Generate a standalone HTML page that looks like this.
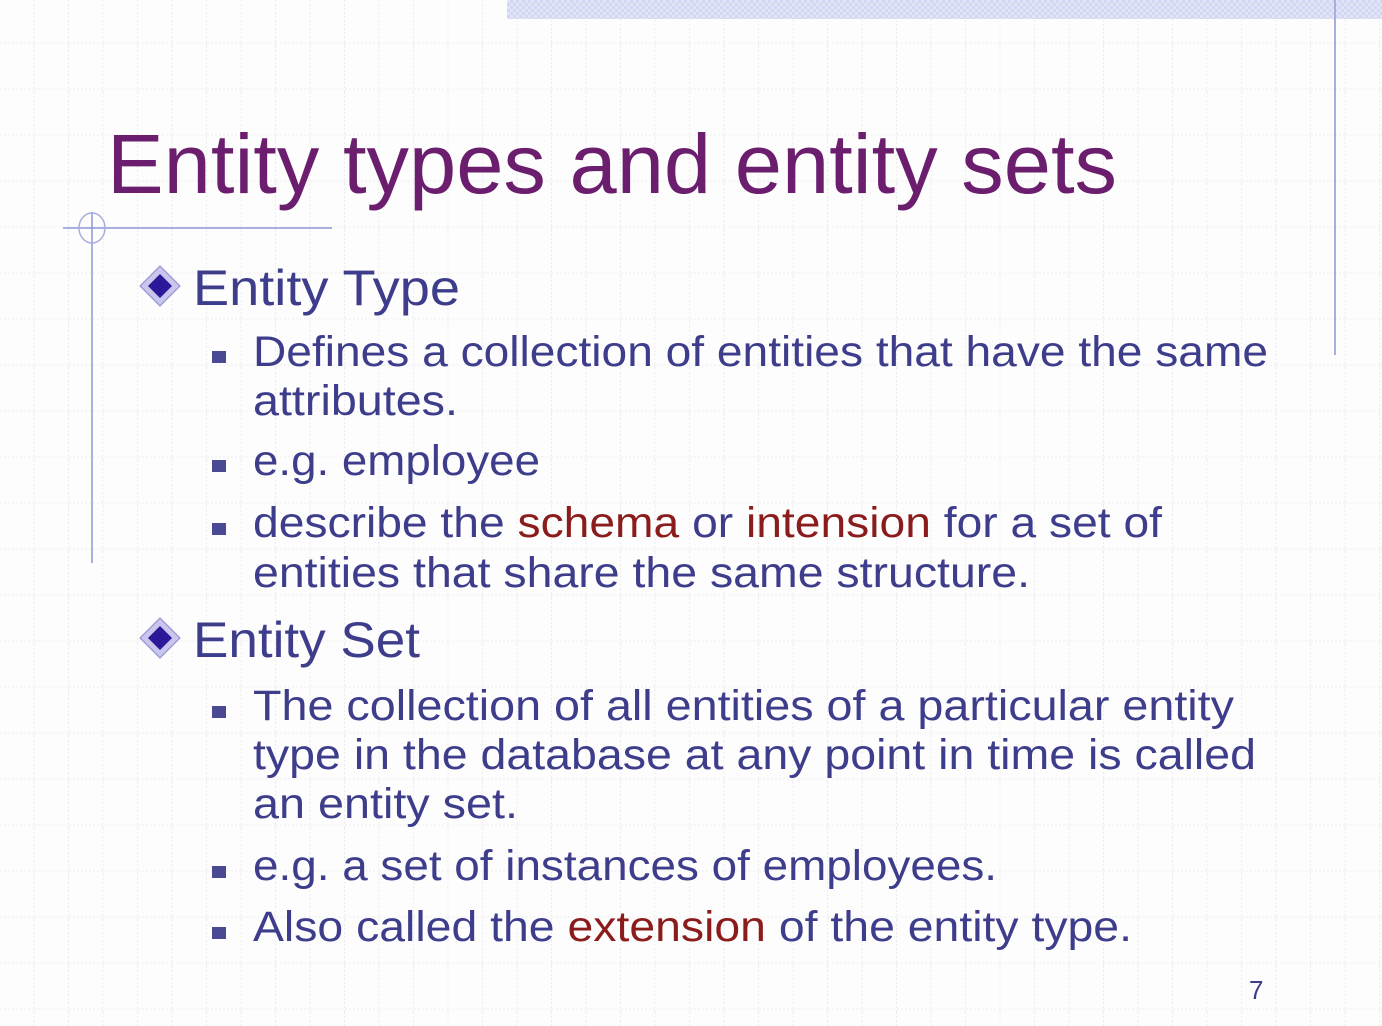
<!DOCTYPE html>
<html><head><meta charset="utf-8"><style>
html,body{margin:0;padding:0;background:#fff;}
svg{display:block;}
text{font-family:"Liberation Sans",sans-serif;}
</style></head><body>
<svg width="1382" height="1026" viewBox="0 0 1382 1026" xmlns="http://www.w3.org/2000/svg">
<defs>
<pattern id="g" x="0" y="0" width="34.5" height="46" patternUnits="userSpaceOnUse">
<line x1="34" y1="0" x2="34" y2="46" stroke="#ededf0" stroke-width="1" stroke-dasharray="2,2"/>
<line x1="0" y1="43" x2="34.5" y2="43" stroke="#ededf0" stroke-width="1" stroke-dasharray="2,2"/>
</pattern>
<pattern id="chk" x="0" y="0" width="6" height="6" patternUnits="userSpaceOnUse">
<rect width="6" height="6" fill="#e2e5f8"/>
<rect width="3" height="3" fill="#d2d6f2"/>
<rect x="3" y="3" width="3" height="3" fill="#d2d6f2"/>
</pattern>
</defs>
<rect width="1382" height="1026" fill="#fdfdfd"/>
<rect width="1382" height="1026" fill="url(#g)"/>
<rect x="507" y="0" width="875" height="19" fill="url(#chk)"/>
<line x1="1335" y1="0" x2="1335" y2="355" stroke="#a8aee0" stroke-width="2"/>
<line x1="63" y1="228" x2="332" y2="228" stroke="#8f98d8" stroke-width="1.5"/>
<line x1="92" y1="212" x2="92" y2="563" stroke="#8f98d8" stroke-width="1.5"/>
<ellipse cx="92" cy="228" rx="13" ry="15" fill="none" stroke="#a8aee0" stroke-width="1.5"/>

<text x="107" y="193" font-size="84" fill="#6b1d6e" textLength="1010" lengthAdjust="spacingAndGlyphs">Entity types and entity sets</text>

<g>
<polygon points="160,266 180,286 160,306 140,286" fill="#c9c6ee" stroke="#8d88cc" stroke-width="1"/>
<polygon points="160,274 172,286 160,298 148,286" fill="#2a1a9a"/>
</g>
<text x="193" y="305" font-size="50" fill="#3d3d8c" textLength="267" lengthAdjust="spacingAndGlyphs">Entity Type</text>

<g fill="#4a4a94">
<rect x="212" y="351" width="14" height="12"/>
<rect x="212" y="460" width="14" height="12"/>
<rect x="212" y="523" width="14" height="12"/>
<rect x="212" y="706" width="14" height="12"/>
<rect x="212" y="866" width="14" height="12"/>
<rect x="212" y="927" width="14" height="12"/>
</g>
<g font-size="43" fill="#3d3d8c">
<text x="253" y="366" textLength="1015" lengthAdjust="spacingAndGlyphs">Defines a collection of entities that have the same</text>
<text x="253" y="415" textLength="205" lengthAdjust="spacingAndGlyphs">attributes.</text>
<text x="253" y="475" textLength="287" lengthAdjust="spacingAndGlyphs">e.g. employee</text>
<text x="253" y="537" textLength="909" lengthAdjust="spacingAndGlyphs">describe the <tspan fill="#8b1c1c">schema</tspan> or <tspan fill="#8b1c1c">intension</tspan> for a set of</text>
<text x="253" y="587" textLength="777" lengthAdjust="spacingAndGlyphs">entities that share the same structure.</text>
</g>

<g>
<polygon points="160,618 180,638 160,658 140,638" fill="#c9c6ee" stroke="#8d88cc" stroke-width="1"/>
<polygon points="160,626 172,638 160,650 148,638" fill="#2a1a9a"/>
</g>
<text x="193" y="657" font-size="50" fill="#3d3d8c" textLength="227" lengthAdjust="spacingAndGlyphs">Entity Set</text>

<g font-size="43" fill="#3d3d8c">
<text x="253" y="720" textLength="981" lengthAdjust="spacingAndGlyphs">The collection of all entities of a particular entity</text>
<text x="253" y="769" textLength="1003" lengthAdjust="spacingAndGlyphs">type in the database at any point in time is called</text>
<text x="253" y="818" textLength="265" lengthAdjust="spacingAndGlyphs">an entity set.</text>
<text x="253" y="880" textLength="744" lengthAdjust="spacingAndGlyphs">e.g. a set of instances of employees.</text>
<text x="253" y="941" textLength="879" lengthAdjust="spacingAndGlyphs">Also called the <tspan fill="#8b1c1c">extension</tspan> of the entity type.</text>
</g>

<text x="1249" y="999" font-size="26" fill="#3d3d8c">7</text>
</svg>
</body></html>
